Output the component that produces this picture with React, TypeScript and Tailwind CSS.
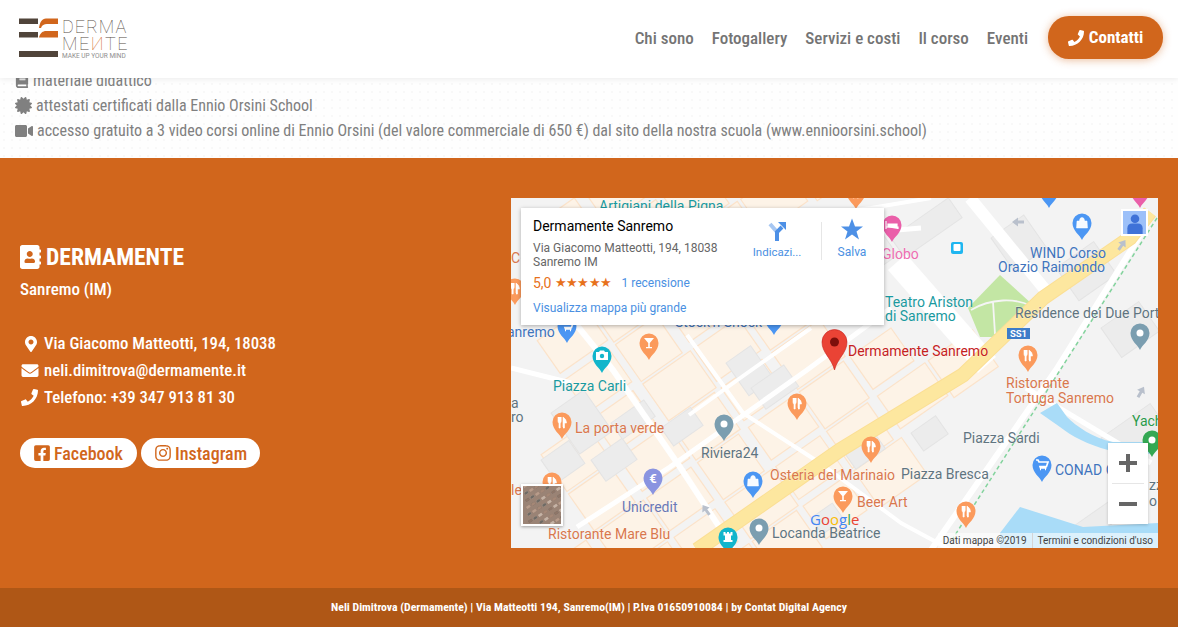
import { FaAddressBook, FaBook, FaCertificate, FaEnvelope, FaFacebookSquare, FaInstagram, FaMapMarkerAlt, FaPhone, FaVideo } from "react-icons/fa";
import type { ReactNode } from "react";

const NAV = ["Chi sono", "Fotogallery", "Servizi e costi", "Il corso", "Eventi"];

const COND = "font-['Roboto_Condensed',Roboto,sans-serif] [font-stretch:75%]";

/* street blocks on the tilted grid of the map */
const blockCells = () => {
  const cells: { x: number; y: number; w: number; h: number }[] = [];
  for (let u = -7; u < 9; u++) {
    for (let v = -5; v < 8; v++) {
      const x = 210 + u * 62 * 0.82 + v * 48 * 0.57;
      const y = 190 - u * 62 * 0.57 + v * 48 * 0.82;
      const rightOfRail = x > 430 + (190 - y) * 0.8 || (x > 360 && y < 125);
      const plaza = x > 300 && y < 140;
      if (rightOfRail || plaza || x < 20) continue;
      cells.push({ x, y, w: 58 - ((u + v + 14) % 3) * 4, h: 45 - ((u + 7) % 2) * 5 });
    }
  }
  return cells;
};

const GREY_BLOCKS = [
  [10, 60, 70, 30], [150, 230, 36, 22], [215, 165, 30, 40], [240, 190, 40, 26], [80, 262, 38, 26], [30, 262, 34, 28],
  [380, 40, 70, 24], [330, 60, 48, 30], [480, 40, 40, 40], [545, 70, 46, 40], [590, 130, 46, 36], [590, 240, 60, 30],
  [330, 250, 36, 26], [400, 235, 30, 22], [560, 330, 60, 20], [40, 215, 40, 50], [100, 225, 40, 20], [130, 30, 30, 18], [300, 320, 26, 20],
];

const ROADS: { d: string; w: number }[] = [
  { d: "M60 120 L102 172 L169 269 L222 350", w: 6 },
  { d: "M66 329 L159 269 L296 172 L380 110", w: 5 },
  { d: "M0 170 L60 185", w: 5 },
  { d: "M176 137 L232 215 L309 265 L390 325 L440 352", w: 4 },
  { d: "M178 217 L232 178 L300 130", w: 4 },
  { d: "M386 64 L476 167", w: 24 },
  { d: "M459 0 L536 94", w: 12 },
  { d: "M420 352 L545 172 L640 20", w: 6 },
  { d: "M515 190 L640 265", w: 5 },
  { d: "M280 20 L360 10 L420 0", w: 4 },
  { d: "M350 35 L410 30", w: 5 },
];

/* one-way arrows: x, y, rotation */
const ARROWS = [
  [611, 47, 35],
  [507, 24, -90],
  [195, 312, -35],
  [630, 194, 30],
];

/* mottled rooftops for the satellite thumbnail */
const SATELLITE = Array.from({ length: 90 }, (_, i) => ({
  x: (i * 7) % 38,
  y: (i * 11) % 38,
  fill: ["#8f7668", "#b89c8b", "#6f6a64", "#a58877", "#c4b3a6"][i % 5],
}));

type PinProps = { x: number; y: number; color: string; icon?: "food" | "drink" | "bag" | "dot" | "cart" | "euro" | "camera" | "bed" | "castle" };

const Pin = ({ x, y, color, icon = "dot" }: PinProps) => (
  <g transform={`translate(${x} ${y})`}>
    <path d="M0 11 C-2 6 -9.500 2 -9.500 -6 A9.500 9.500 0 1 1 9.500 -6 C9.500 2 2 6 0 11 Z" fill={color} />
    {icon === "dot" && <circle cy={-6} r={3.5} fill="#fff" />}
    {icon === "food" && <path d="M-4 -11 V-7 Q-4 -5 -3 -5 V0 H-1.800 V-5 Q-0.800 -5 -0.800 -7 V-11 M1 -1 V-11 Q4.500 -9 4.500 -5 H2.500 V0 H1" fill="#fff" stroke="#fff" strokeWidth={0.6} />}
    {icon === "drink" && <path d="M-5 -11 H5 L0.800 -6 V-2 H3 V-0.800 H-3 V-2 H-0.800 V-6 Z" fill="#fff" />}
    {icon === "bag" && <path d="M-5 -8 H5 L5.500 -1 H-5.500 Z M-2.500 -8 Q-2.500 -11.500 0 -11.500 Q2.500 -11.500 2.500 -8" fill="#fff" stroke="#fff" strokeWidth={0.5} fillOpacity={0.95} />}
    {icon === "cart" && <path d="M-6 -11 H-4 L-3 -9 H6 L4.500 -4.500 H-2 L-1.500 -3 H4.500 M-2 -1.500 H-1 M3 -1.500 H4" fill="none" stroke="#fff" strokeWidth={1.700} />}
    {icon === "euro" && <text y={-1.500} textAnchor="middle" fontSize={13} fontWeight={700} fill="#fff">€</text>}
    {icon === "camera" && (
      <>
        <path d="M-6 -10 H-3 L-2 -11.500 H2 L3 -10 H6 V-2 H-6 Z" fill="#fff" />
        <circle cy={-6} r={2.200} fill={color} />
      </>
    )}
    {icon === "bed" && <path d="M-6 -10 V-2 M-6 -4 H6 V-2 M-4 -7 H5 V-4 H-4 Z" fill="#fff" stroke="#fff" strokeWidth={1.200} />}
    {icon === "castle" && <path d="M-4.500 -11 H-2.500 V-9.500 H-1 V-11 H1 V-9.500 H2.500 V-11 H4.500 V-7.500 H3 V-3 H4.500 V-1 H-4.500 V-3 H-3 V-7.500 H-4.500 Z" fill="#fff" />}
  </g>
);

const ORANGE_PIN = "#fb9a5c";
const BLUE_PIN = "#4b96f3";
const SLATE_PIN = "#7b9eb0";

type LabelProps = { x: number; y: number; color: string; children: ReactNode };

const Label = ({ x, y, color, children }: LabelProps) => (
  <text x={x} y={y} fontSize={14} fill={color} stroke="#fff" strokeWidth={0.3} paintOrder="stroke">
    {children}
  </text>
);

const MapCanvas = () => (
  <svg viewBox="0 0 647 350" className="block h-full w-full font-['Roboto',sans-serif]">
    <rect width={647} height={350} fill="#f3f3f3" />
    {blockCells().map((c) => (
      <rect
        key={`${c.x}-${c.y}`}
        width={c.w}
        height={c.h}
        transform={`translate(${c.x} ${c.y}) rotate(-35)`}
        fill="#fdf3e7"
        stroke="#fce3ca"
        strokeWidth={1.200}
      />
    ))}
    {GREY_BLOCKS.map(([x, y, w, h]) => (
      <rect key={`${x}-${y}`} width={w} height={h} transform={`translate(${x} ${y}) rotate(-35)`} fill="#ececec" stroke="#e4e4e4" />
    ))}
    {ROADS.map((r) => (
      <path key={r.d} d={r.d} fill="none" stroke="#ffffff" strokeWidth={r.w} strokeLinejoin="round" />
    ))}
    {/* harbour water */}
    <path d="M489 335 L509 309 L572 329 L647 325 V350 H489 Z" fill="#a9dcf8" />
    <path d="M529 215 L546 205 L556 219 C565 228 582 240 602 244 L640 244 L640 256 L597 252 C578 247 560 238 549 229 Z" fill="#a9dcf8" />
    {/* park */}
    <path d="M457 110 L489 77 L522 107 L482 139 L469 139 Z" fill="#c3e6a4" />
    <path d="M460 112 C480 100 505 100 520 108 M482 104 L484 136" fill="none" stroke="#f5f5f5" strokeWidth={1.800} />
    {/* main road */}
    <path d="M186 352 L329 252 L452 177 L532 100 L619 40 L639 14" fill="none" stroke="#fbdf95" strokeWidth={15} />
    <path d="M186 352 L329 252 L452 177 L532 100 L619 40 L639 14" fill="none" stroke="#fde79f" strokeWidth={13} />
    {/* railway */}
    <path d="M646 20 L546 177 L439 345" fill="none" stroke="#82d39c" strokeWidth={1.500} strokeDasharray="4 3" />
    {ARROWS.map(([x, y, r]) => (
      <path key={`${x}-${y}`} d="M0 -6 L4.500 0 H1.500 V6 H-1.500 V0 H-4.500 Z" fill="#b9c0cc" transform={`translate(${x} ${y}) rotate(${r})`} />
    ))}
    {/* markers */}
    <Pin x={629} y={-1} color="#ea5fa9" icon="bed" />
    <Pin x={345} y={0} color={ORANGE_PIN} icon="food" />
    <Pin x={538} y={-1} color={BLUE_PIN} />
    <Pin x={381} y={33} color="#ea5fa9" icon="bed" />
    <Pin x={571} y={31} color={BLUE_PIN} icon="bag" />
    <Pin x={629} y={141} color={SLATE_PIN} />
    <Pin x={517} y={163} color={ORANGE_PIN} icon="food" />
    <Pin x={56} y={134} color={BLUE_PIN} icon="cart" />
    <Pin x={138} y={151} color={ORANGE_PIN} icon="drink" />
    <Pin x={91} y={164} color="#12b5cb" icon="camera" />
    <Pin x={263} y={126} color={BLUE_PIN} />
    <Pin x={51} y={230} color={ORANGE_PIN} icon="food" />
    <Pin x={213} y={232} color={SLATE_PIN} />
    <Pin x={286} y={211} color={ORANGE_PIN} icon="food" />
    <Pin x={142} y={286} color="#8a94e0" icon="euro" />
    <Pin x={242} y={289} color={BLUE_PIN} icon="bag" />
    <Pin x={360} y={254} color={ORANGE_PIN} icon="food" />
    <Pin x={332} y={304} color={ORANGE_PIN} icon="drink" />
    <Pin x={455} y={319} color={ORANGE_PIN} icon="food" />
    <Pin x={531} y={273} color={BLUE_PIN} icon="cart" />
    <Pin x={217} y={345} color="#12b5cb" icon="castle" />
    <Pin x={248} y={336} color={SLATE_PIN} />
    <Pin x={641} y={248} color="#34a853" />
    <Pin x={4} y={96} color={ORANGE_PIN} icon="food" />
    <Pin x={41} y={290} color={ORANGE_PIN} icon="food" />
    {/* bus stop */}
    <rect x={440} y={44} width={12} height={12} rx={2} fill="#1fb6f0" />
    <rect x={442.500} y={46} width={7} height={7} rx={1} fill="#fff" />
    {/* SS1 shield */}
    <rect x={496} y={130} width={23} height={11} fill="#3d7cc9" />
    <text x={507.500} y={139} fontSize={9.500} fontWeight={700} fill="#fff" textAnchor="middle">SS1</text>
    {/* red place marker */}
    <path d="M323.500 172 C320.500 160 311 155 311 144 A12.500 12.500 0 1 1 336 144 C336 155 326.500 160 323.500 172 Z" fill="#ea4335" stroke="#c5221f" strokeWidth={0.6} />
    <circle cx={323.500} cy={144} r={4.500} fill="#7d0f0b" />

    <Label x={88} y={13} color="#1a9a9f">Artigiani della Pigna</Label>
    <Label x={164} y={129} color="#3f74bd">Stock'n Shock</Label>
    <Label x={0} y={65} color="#d9774d">C</Label>
    <Label x={371} y={61} color="#ee6db1">Globo</Label>
    <Label x={519} y={60} color="#3f74bd">WIND Corso</Label>
    <Label x={487} y={74} color="#3f74bd">Orazio Raimondo</Label>
    <Label x={374} y={109} color="#1a9a9f">Teatro Ariston</Label>
    <Label x={374} y={123} color="#1a9a9f">di Sanremo</Label>
    <Label x={504} y={120} color="#5f7480">Residence dei Due Porti</Label>
    <Label x={337} y={158} color="#c5221f">Dermamente Sanremo</Label>
    <Label x={-4} y={139} color="#3f74bd">anremo</Label>
    <Label x={42} y={193} color="#1a9a9f">Piazza Carli</Label>
    <Label x={0} y={210} color="#5f7480">a</Label>
    <Label x={0} y={224} color="#5f7480">ro</Label>
    <Label x={64} y={235} color="#d9774d">La porta verde</Label>
    <Label x={190} y={260} color="#5f7480">Riviera24</Label>
    <Label x={111} y={314} color="#6a78b5">Unicredit</Label>
    <Label x={37} y={341} color="#d9774d">Ristorante Mare Blu</Label>
    <Label x={0} y={297} color="#d9774d">le</Label>
    <Label x={259} y={282} color="#d9774d">Osteria del Marinaio</Label>
    <Label x={390} y={281} color="#5f7480">Piazza Bresca</Label>
    <Label x={452} y={245} color="#5f7480">Piazza Sardi</Label>
    <Label x={346} y={309} color="#d9774d">Beer Art</Label>
    <Label x={261} y={340} color="#5f7480">Locanda Beatrice</Label>
    <Label x={495} y={190} color="#d9774d">Ristorante</Label>
    <Label x={495} y={205} color="#d9774d">Tortuga Sanremo</Label>
    <Label x={544} y={277} color="#3f74bd">CONAD C</Label>
    <Label x={621} y={228} color="#2a9a4a">Yach</Label>
    <Label x={638} y={292} color="#5f7480">zz</Label>
    <Label x={638} y={308} color="#5f7480">o</Label>
    <text x={299} y={327} fontSize={15} fontWeight={500} fontFamily="'Open Sans',sans-serif">
      <tspan fill="#4285f4">G</tspan><tspan fill="#ea4335">o</tspan><tspan fill="#fbbc05">o</tspan><tspan fill="#4285f4">g</tspan><tspan fill="#34a853">l</tspan><tspan fill="#ea4335">e</tspan>
    </text>
  </svg>
);

const InfoCard = () => (
  <div className="absolute left-[10px] top-[10px] flex h-[117px] w-[363px] bg-white font-['Roboto',sans-serif] shadow-[0_1px_4px_rgba(0,0,0,0.3)]">
    <div className="w-[222px] whitespace-nowrap pl-3 pt-[10px]">
      <div className="text-sm leading-4 text-black">Dermamente Sanremo</div>
      <div className="mt-[7px] text-xs leading-[14px] text-[#666666]">Via Giacomo Matteotti, 194, 18038<br />Sanremo IM</div>
      <div className="mt-[4px] flex items-center text-xs leading-4">
        <span className="text-sm text-[#e7711b]">5,0</span>
        <span className="ml-[3px] text-[13px] tracking-[-0.6px] text-[#e7711b]">★★★★★</span>
        <span className="ml-[10px] text-[#4a90e2]">1 recensione</span>
      </div>
      <div className="mt-[7px] text-xs leading-4 text-[#4a90e2]">Visualizza mappa più grande</div>
    </div>
    <div className="flex h-[52px] w-[78px] flex-col items-center pr-[10px] pt-[13px] text-xs text-[#4a90e2]">
      <svg viewBox="0 0 20 20" className="h-5 w-5" aria-hidden="true">
        <path d="M3 3 L10 11 V20" fill="none" stroke="#a7c7f2" strokeWidth={4} />
        <path d="M10 20 V11 L15 6" fill="none" stroke="#4d90e6" strokeWidth={4} />
        <path d="M11 1 H19 V9 Z" fill="#4d90e6" />
      </svg>
      <span className="mt-[3px] text-[11.5px] leading-4">Indicazi...</span>
    </div>
    <div className="mt-[14px] h-[38px] w-px bg-[#e6e6e6]" />
    <div className="flex w-[60px] flex-col items-center pt-[9px] text-xs text-[#4a90e2]">
      <svg viewBox="0 0 24 24" className="h-[24px] w-[24px]" fill="#4d90e6" aria-hidden="true">
        <path d="M12 1.500 L15 9.500 H23 L16.500 14.500 L19 22.500 L12 17.500 L5 22.500 L7.500 14.500 L1 9.500 H9 Z" />
      </svg>
      <span className="mt-[3px] leading-4">Salva</span>
    </div>
  </div>
);

const Logo = () => (
  <div className="flex items-start gap-[4px]">
    <svg viewBox="0 0 39 39" className="h-[39px] w-[39px]" aria-hidden="true">
      <rect x={0} y={0.500} width={19} height={5.500} fill="#50443a" />
      <rect x={0} y={14} width={19} height={5.500} fill="#50443a" />
      <rect x={0} y={33} width={39} height={6} fill="#50443a" />
      <path d="M39 0.500 H27 C23 0.500 21 4 20 10 H22 C23 7 25 6 28 6 H39 Z" fill="#d1661c" />
      <path d="M39 13 H27 C24 13 21 15 20 19.500 H39 Z" fill="#d1661c" />
    </svg>
    <div className="w-[66px] font-['Roboto',sans-serif] text-[#574d44]">
      <div className="text-[18px] font-thin leading-[17px] tracking-[1px]">DERMA</div>
      <div className="text-[18px] font-thin leading-[17px] tracking-[1.500px]">ME<span className="text-[#d1661c]">И</span>TE</div>
      <div className="mt-[1px] whitespace-nowrap text-[6.500px] leading-[7px] text-[#8e8e8e]">MAKE UP YOUR MIND</div>
    </div>
  </div>
);

const Header = () => (
  <header className="absolute inset-x-0 top-0 flex h-[78px] items-center justify-between bg-white pl-[19px] pr-[15px] shadow-[0_1px_6px_rgba(0,0,0,0.08)]">
    <Logo />
    <nav className={`flex items-center gap-[18px] text-[17px] font-medium text-[#747474] ${COND}`}>
      {NAV.map((item) => (
        <a key={item} href="#">{item}</a>
      ))}
      <a href="#" className="mb-[3px] ml-[2px] flex h-[43px] w-[115px] items-center justify-center gap-[5px] rounded-[21px] bg-[#d1661c] font-bold text-white shadow-[0_1px_8px_rgba(209,102,28,0.45)]">
        <FaPhone className="h-4 w-4" /> Contatti
      </a>
    </nav>
  </header>
);

const Intro = () => (
  <section className={`bg-[#fefefe] bg-[radial-gradient(#f8f8f8_1px,transparent_1px)] bg-size-[8px_8px] pb-[15px] pl-[15px] pt-[68px] text-[16px] leading-[25px] text-[#808080] ${COND}`}>
    <p className="flex items-center gap-1"><FaBook className="h-[14px] w-[14px]" /> materiale didattico</p>
    <p className="flex items-center gap-1"><FaCertificate className="h-[17px] w-[17px]" /> attestati certificati dalla Ennio Orsini School</p>
    <p className="flex items-center gap-1"><FaVideo className="h-[16px] w-[18px]" /> accesso gratuito a 3 video corsi online di Ennio Orsini (del valore commerciale di 650 €) dal sito della nostra scuola (www.ennioorsini.school)</p>
  </section>
);

const Contact = () => (
  <section className="flex h-[430px] bg-[#d1661c] py-10 pl-5 pr-5 text-white">
    <div className={`w-[491px] pt-[44px] ${COND}`}>
      <h2 className="flex items-center gap-[5px] text-[23.6px] font-bold leading-[30px]"><FaAddressBook className="h-[24px] w-[21px]" /> DERMAMENTE</h2>
      <p className="mt-[5px] text-[17px] font-medium leading-[24px]">Sanremo (IM)</p>
      <ul className="mt-[29px] text-[16.800px] font-medium leading-[27px]">
        <li className="flex items-center"><span className="flex w-6 justify-start pl-[3px]"><FaMapMarkerAlt className="h-4 w-4" /></span>Via Giacomo Matteotti, 194, 18038</li>
        <li className="flex items-center"><span className="flex w-6 justify-start pl-[1px]"><FaEnvelope className="h-[17px] w-[18px]" /></span>neli.dimitrova@dermamente.it</li>
        <li className="flex items-center"><span className="flex w-6 justify-start pl-[1px]"><FaPhone className="h-[17px] w-[17px]" /></span>Telefono: +39 347 913 81 30</li>
      </ul>
      <div className="mt-[27px] flex gap-1 text-[18px] font-medium text-[#d1661c]">
        <a href="#" className="flex h-[30px] w-[117px] items-center gap-1 rounded-[15px] bg-white pl-[14px]"><FaFacebookSquare className="h-[18px] w-4" /> Facebook</a>
        <a href="#" className="flex h-[30px] w-[119px] items-center gap-1 rounded-[15px] bg-white pl-[14px]"><FaInstagram className="h-[18px] w-4" /> Instagram</a>
      </div>
    </div>
    <div className="relative h-[350px] flex-1 overflow-hidden">
      <MapCanvas />
      <InfoCard />
      <div className="absolute right-[10px] top-[11px] flex h-[27px] w-[27px] items-end justify-center overflow-hidden border-2 border-white bg-[#9cc0f9]">
        <svg viewBox="0 0 20 22" className="h-[21px] w-[20px]" fill="#3f72d8" aria-hidden="true">
          <circle cx={10} cy={6} r={4.500} />
          <path d="M2 22 V16 Q2 11 7 11 H13 Q18 11 18 16 V22 Z" />
        </svg>
      </div>
      <div className="absolute left-[10px] top-[286px] h-[42px] w-[42px] border-2 border-white shadow-[0_1px_3px_rgba(0,0,0,0.35)]">
        <svg viewBox="0 0 38 38" className="block h-full w-full" aria-hidden="true">
          <rect width={38} height={38} fill="#9a8375" />
          {SATELLITE.map((s) => (
            <rect key={`${s.x}-${s.y}`} x={s.x} y={s.y} width={4} height={2.500} fill={s.fill} transform={`rotate(-35 ${s.x} ${s.y})`} />
          ))}
        </svg>
      </div>
      <div className="absolute right-[10px] top-[245px] flex h-[81px] w-10 flex-col items-center bg-white shadow-[0_1px_3px_rgba(0,0,0,0.2)]">
        <div className="flex h-10 w-full items-center justify-center text-[#666666]">
          <div className="relative h-[18px] w-[18px]">
            <div className="absolute left-0 top-[7px] h-1 w-full bg-[#666666]" />
            <div className="absolute left-[7px] top-0 h-full w-1 bg-[#666666]" />
          </div>
        </div>
        <div className="h-px w-8 bg-[#e6e6e6]" />
        <div className="flex h-10 w-full items-center justify-center"><div className="h-[4px] w-[18px] bg-[#666666]" /></div>
      </div>
      <div className="absolute bottom-0 right-0 flex h-[15px] items-center whitespace-nowrap bg-white/60 font-['Roboto',sans-serif] text-[10px] text-[#444444]">
        <span className="px-[5px]">Dati mappa ©2019</span>
        <span className="border-l border-[#d5d5d5] px-[5px]">Termini e condizioni d'uso</span>
      </div>
    </div>
  </section>
);

export default function App() {
  return (
    <div className="relative h-[627px] w-[1178px] overflow-hidden bg-white">
      <Intro />
      <Contact />
      <footer className={`flex h-[39px] items-center justify-center bg-[#af5716] text-[11.750px] font-bold text-white ${COND}`}>
        Neli Dimitrova (Dermamente) | Via Matteotti 194, Sanremo(IM) | P.Iva 01650910084 | by Contat Digital Agency
      </footer>
      <Header />
    </div>
  );
}
